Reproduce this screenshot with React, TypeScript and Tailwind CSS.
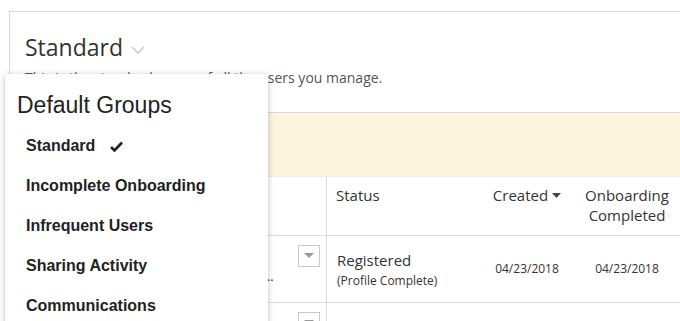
const groups = ["Standard", "Incomplete Onboarding", "Infrequent Users", "Sharing Activity", "Communications"]

function RowSelect() {
  return (
    <div className="w-[22px] h-[22px] border border-[#c8c8c8] bg-white flex items-center justify-center">
      <svg width="10" height="6" viewBox="0 0 10 6">
        <path d="M0 0h10L5 5z" fill="#999" />
      </svg>
    </div>
  )
}

function UserRow({ status, sub }: { status: string; sub?: string }) {
  return (
    <div className="flex border-b border-[#dcdcdc] h-[67px]">
      <div className="w-[317px] shrink-0 border-r border-[#dcdcdc] flex justify-between pl-4 pr-[6px] pt-[9px]">
        <span className="mt-[22px] text-[13px] text-[#333] truncate w-[250px]">
          Jonathan Harrington-Whitfield, Regional Operations Manager
        </span>
        <RowSelect />
      </div>
      <div className="w-[150px] shrink-0 pl-[10px] pt-[13px]">
        <div className="text-[15px] leading-[22px] text-[#333]">{status}</div>
        {sub && <div className="text-[12px] leading-[20px] text-[#333]">{sub}</div>}
      </div>
      <div className="w-[100px] shrink-0 flex items-center justify-center text-[12px] text-[#333]">04/23/2018</div>
      <div className="w-[100px] shrink-0 flex items-center justify-center text-[12px] text-[#333]">04/23/2018</div>
    </div>
  )
}

export default function App() {
  return (
    <div className="relative w-[680px] h-[321px] overflow-hidden bg-white pt-[11px] pl-[9px]" style={{ fontFamily: '"Open Sans", sans-serif' }}>
      <div className="w-[720px] border-t border-l border-[#d9d9d9]">
        <div className="pl-[15px] pt-[20px] pb-[24px] border-b border-[#d9d9d9]">
          <div className="flex items-center gap-[8px]">
            <h1 className="text-[23px] leading-[30px] text-[#333] font-normal">Standard</h1>
            <svg width="14" height="8" viewBox="0 0 14 8" className="mt-[6px]">
              <path d="M1 1l6 6 6-6" fill="none" stroke="#c4c4c4" strokeWidth="1.4" />
            </svg>
          </div>
          <p className="mt-[6px] text-[14px] leading-[20px] text-[#555]">This is the standard group of all the users you manage.</p>
        </div>
        <div className="h-[64px] bg-[#fcf5dd] border-b border-[#ececec]" />
        <div className="flex border-b border-[#dcdcdc] h-[59px]">
          <div className="w-[317px] shrink-0 border-r border-[#dcdcdc]" />
          <div className="w-[150px] shrink-0 pl-[9px] pt-[8px] text-[15px] leading-[20px] text-[#333]">Status</div>
          <div className="w-[100px] shrink-0 pt-[8px] flex justify-center items-start gap-[4px] text-[15px] leading-[20px] text-[#333]">
            Created
            <svg width="9" height="5" viewBox="0 0 9 5" className="mt-[8px]">
              <path d="M0 0h9L4.5 5z" fill="#444" />
            </svg>
          </div>
          <div className="w-[100px] shrink-0 pt-[8px] text-center text-[15px] leading-[20px] text-[#333]">
            Onboarding
            <br />
            Completed
          </div>
        </div>
        <UserRow status="Registered" sub="(Profile Complete)" />
        <UserRow status="Registered" sub="(Profile Complete)" />
      </div>

      <div
        className="absolute left-[5px] top-[74px] w-[263px] h-[280px] bg-white shadow-[0_1px_6px_rgba(0,0,0,0.25)] pl-[12px] pt-[16px]"
        style={{ fontFamily: '"Liberation Sans", Arial, sans-serif' }}
      >
        <div className="text-[23px] leading-[30px] text-[#222]">Default Groups</div>
        <ul className="mt-[6px] pl-[9px]">
          {groups.map((g, i) => (
            <li key={g} className="h-[40px] flex items-center gap-[15px] text-[16px] font-bold text-[#222]">
              {g}
              {i === 0 && (
                <svg width="13" height="11" viewBox="0 0 13 11">
                  <path d="M1 6l3.5 3.5L12 1.5" fill="none" stroke="#222" strokeWidth="2.6" />
                </svg>
              )}
            </li>
          ))}
        </ul>
      </div>
    </div>
  )
}
